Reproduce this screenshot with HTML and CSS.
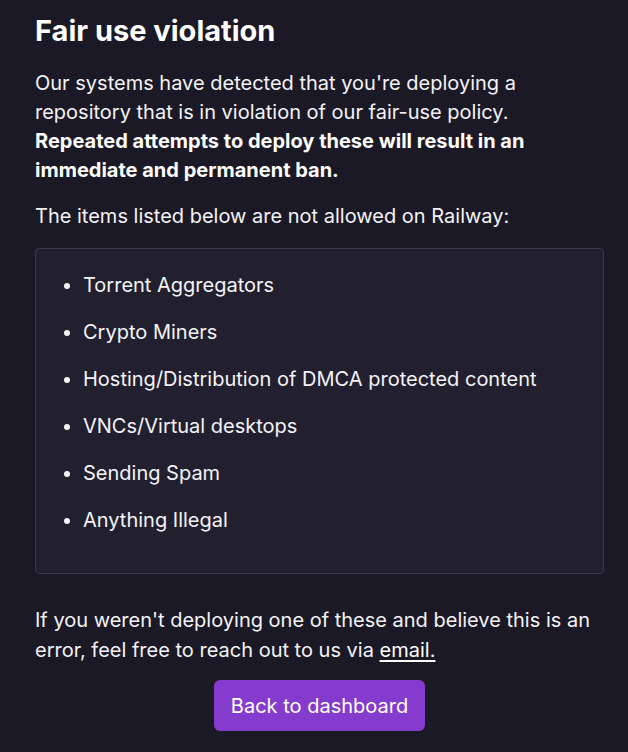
FILE: index.html
```html
<!DOCTYPE html>
<html lang="en">
<head>
<meta charset="utf-8">
<title>Fair use violation</title>
<link rel="stylesheet" href="styles.css">
</head>
<body>
<main class="page">
  <h1 class="title">Fair use violation</h1>
  <p class="text">Our systems have detected that you're deploying a repository that is in violation of our fair-use policy. <strong>Repeated attempts to deploy these will result in an immediate and permanent ban.</strong></p>
  <p class="text">The items listed below are not allowed on Railway:</p>
  <div class="box">
    <ul class="list">
      <li>Torrent Aggregators</li>
      <li>Crypto Miners</li>
      <li>Hosting/Distribution of DMCA protected content</li>
      <li>VNCs/Virtual desktops</li>
      <li>Sending Spam</li>
      <li>Anything Illegal</li>
    </ul>
  </div>
  <p class="text footer-text">If you weren't deploying one of these and believe this is an error, feel free to reach out to us via <a class="link" href="#">email.</a></p>
  <div class="actions">
    <a class="button" href="#">Back to dashboard</a>
  </div>
</main>
</body>
</html>
```
FILE: styles.css
```css
html, body {
  margin: 0;
  padding: 0;
  background: #1b1925;
}
body {
  font-family: Inter, "Noto Sans", sans-serif;
  color: #f4f3f7;
}
.page {
  padding: 13px 24px 0 35px;
}
.title {
  margin: 0;
  font-size: 29px;
  line-height: 36px;
  font-weight: 700;
  color: #ffffff;
}
.text {
  margin: 20px 0 0;
  font-size: 20px;
  line-height: 29px;
}
.text + .text {
  margin-top: 17px;
}
.text strong {
  font-weight: 700;
  color: #ffffff;
}
.box {
  margin-top: 17px;
  background: #22202f;
  border: 1px solid #3a3846;
  border-radius: 4px;
  padding: 22px 0 20px;
}
.list {
  margin: 0;
  padding-left: 47px;
  font-size: 20px;
  line-height: 29px;
}
.list li {
  margin-bottom: 18px;
}
.footer-text {
  margin-top: 31px;
  line-height: 30px;
}
.link {
  color: #ffffff;
  text-decoration: underline;
  text-underline-offset: 3px;
}
.actions {
  display: flex;
  justify-content: center;
  margin-top: 15px;
}
.button {
  display: inline-flex;
  align-items: center;
  justify-content: center;
  height: 51px;
  padding: 0 17px;
  background: #853bce;
  border-radius: 6px;
  color: #ffffff;
  font-size: 20px;
  text-decoration: none;
}
```
